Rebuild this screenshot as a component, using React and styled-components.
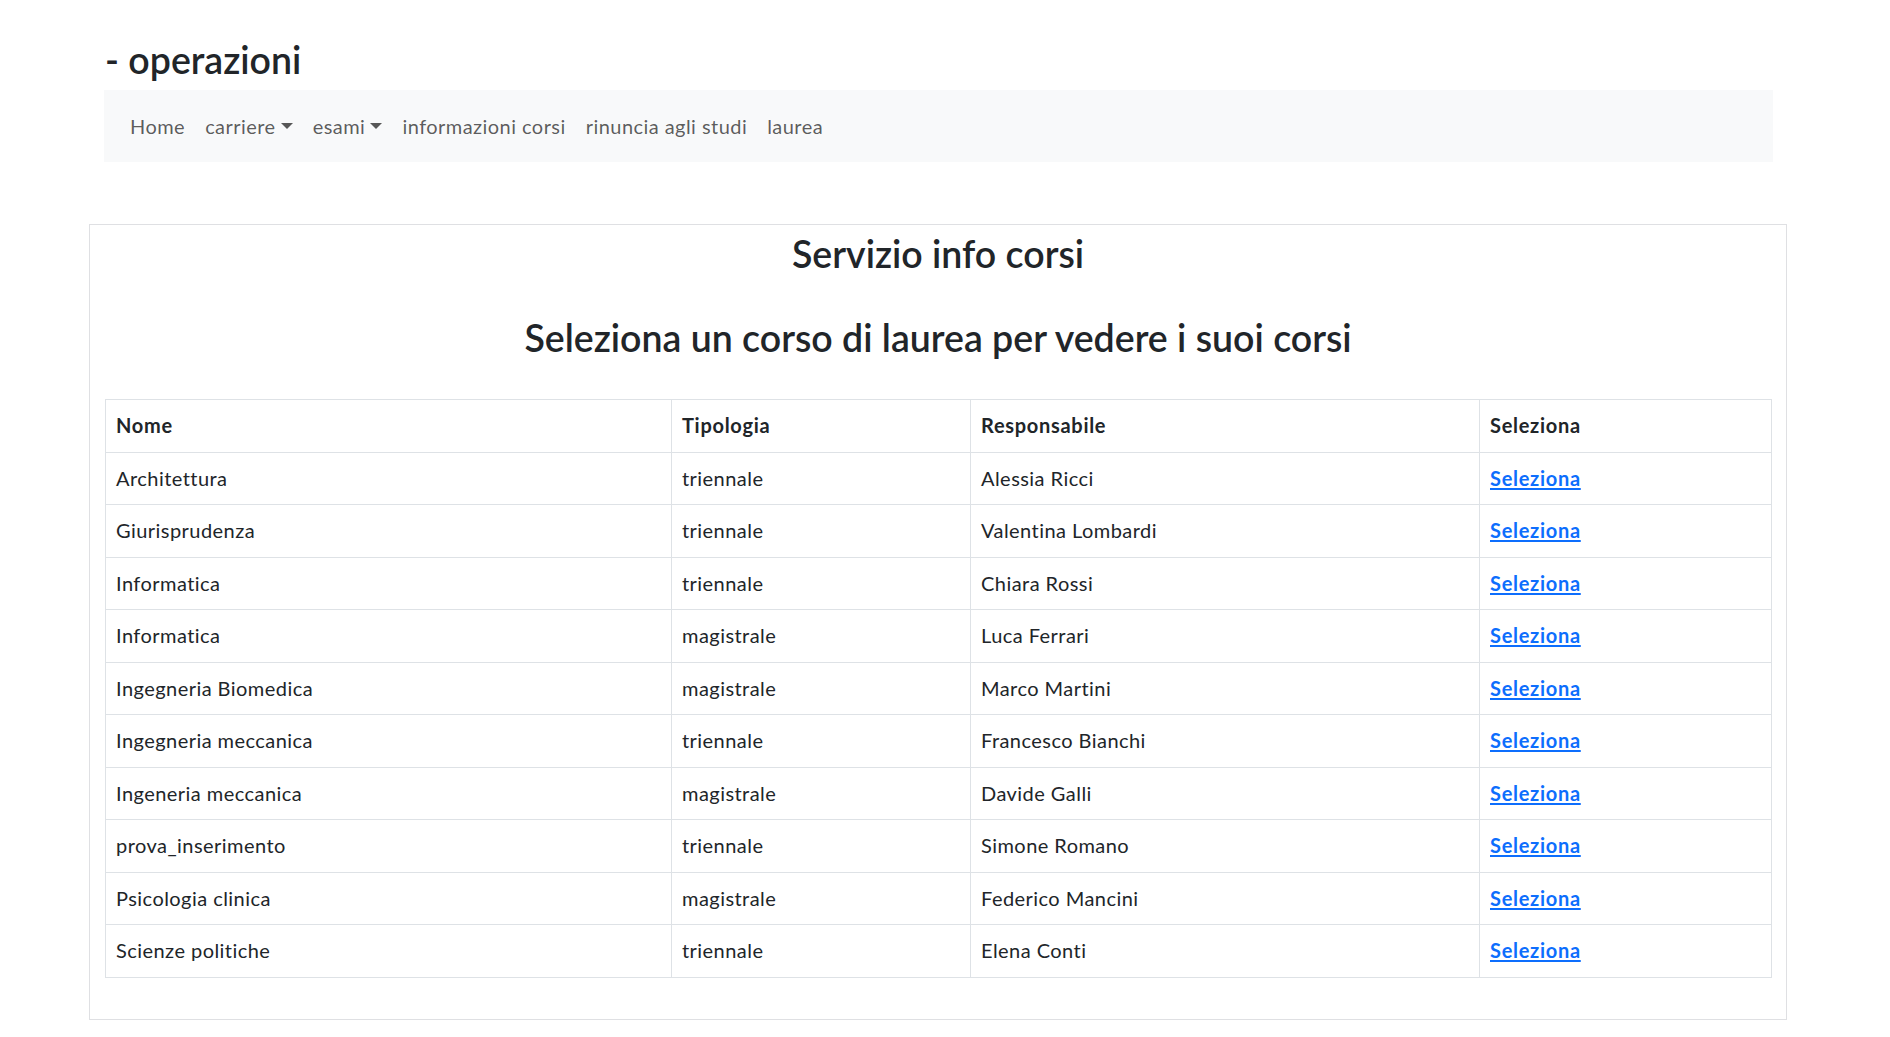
import React from "react";
import styled, { createGlobalStyle } from "styled-components";

const GlobalStyle = createGlobalStyle`
  html, body {
    margin: 0;
    padding: 0;
    background: #fff;
  }
  body {
    font-family: Lato, "Noto Sans", sans-serif;
    font-size: 20px;
    line-height: 1.5;
    letter-spacing: 0.45px;
    color: #212529;
  }
`;

const Page = styled.div`
  width: 1698px;
  padding-left: 89px;
  padding-bottom: 18px;
`;

const Header = styled.header`
  margin: 0 14px 0 15px;
  padding-top: 37px;
`;

const Title = styled.h2`
  margin: 0 0 8px 1px;
  font-size: 37.5px;
  font-weight: 600;
  line-height: 45px;
  letter-spacing: 0;
`;

const Navbar = styled.nav`
  height: 72px;
  display: flex;
  align-items: center;
  padding: 0 16px;
  background: #f8f9fa;
`;

const NavLink = styled.a`
  padding: 0 10px;
  color: rgba(0, 0, 0, 0.65);
  text-decoration: none;
  line-height: 30px;
  cursor: pointer;

  ${(p) =>
    p.$dropdown &&
    `
    &::after {
      content: "";
      display: inline-block;
      margin-left: 0.255em;
      vertical-align: 0.255em;
      border-top: 0.3em solid;
      border-right: 0.3em solid transparent;
      border-left: 0.3em solid transparent;
    }
  `}
`;

const Card = styled.section`
  margin-top: 62px;
  border: 1px solid #dfe0e3;
  padding: 0 15px 41px;
`;

const Heading = styled.h3`
  margin: 0;
  text-align: center;
  font-weight: 600;
  font-size: 37.5px;
  line-height: 45px;
  letter-spacing: 0;
  padding-top: ${(p) => p.$top}px;
`;

const Table = styled.table`
  width: 100%;
  margin-top: 39px;
  border-collapse: collapse;
  table-layout: fixed;

  th,
  td {
    border: 1px solid #dee2e6;
    padding: 10.25px 10px;
    text-align: left;
    line-height: 31px;
    vertical-align: middle;
  }

  th {
    font-weight: 700;
    letter-spacing: 0.7px;
  }
`;

const SelectLink = styled.a`
  color: #0d6efd;
  font-weight: 700;
  letter-spacing: 0.7px;
  text-decoration: underline;
  text-underline-offset: 2px;
  cursor: pointer;
`;

const corsi = [
  ["Architettura", "triennale", "Alessia Ricci"],
  ["Giurisprudenza", "triennale", "Valentina Lombardi"],
  ["Informatica", "triennale", "Chiara Rossi"],
  ["Informatica", "magistrale", "Luca Ferrari"],
  ["Ingegneria Biomedica", "magistrale", "Marco Martini"],
  ["Ingegneria meccanica", "triennale", "Francesco Bianchi"],
  ["Ingeneria meccanica", "magistrale", "Davide Galli"],
  ["prova_inserimento", "triennale", "Simone Romano"],
  ["Psicologia clinica", "magistrale", "Federico Mancini"],
  ["Scienze politiche", "triennale", "Elena Conti"],
];

export default function App() {
  return (
    <Page>
      <GlobalStyle />
      <Header>
        <Title>- operazioni</Title>
        <Navbar>
          <NavLink>Home</NavLink>
          <NavLink $dropdown>carriere</NavLink>
          <NavLink $dropdown>esami</NavLink>
          <NavLink>informazioni corsi</NavLink>
          <NavLink>rinuncia agli studi</NavLink>
          <NavLink>laurea</NavLink>
        </Navbar>
      </Header>

      <Card>
        <Heading $top={6}>Servizio info corsi</Heading>
        <Heading $top={39}>
          Seleziona un corso di laurea per vedere i suoi corsi
        </Heading>
        <Table>
          <colgroup>
            <col style={{ width: 566 }} />
            <col style={{ width: 299 }} />
            <col style={{ width: 509 }} />
            <col style={{ width: 292 }} />
          </colgroup>
          <thead>
            <tr>
              <th>Nome</th>
              <th>Tipologia</th>
              <th>Responsabile</th>
              <th>Seleziona</th>
            </tr>
          </thead>
          <tbody>
            {corsi.map(([nome, tipo, resp], i) => (
              <tr key={i}>
                <td>{nome}</td>
                <td>{tipo}</td>
                <td>{resp}</td>
                <td>
                  <SelectLink>Seleziona</SelectLink>
                </td>
              </tr>
            ))}
          </tbody>
        </Table>
      </Card>
    </Page>
  );
}
